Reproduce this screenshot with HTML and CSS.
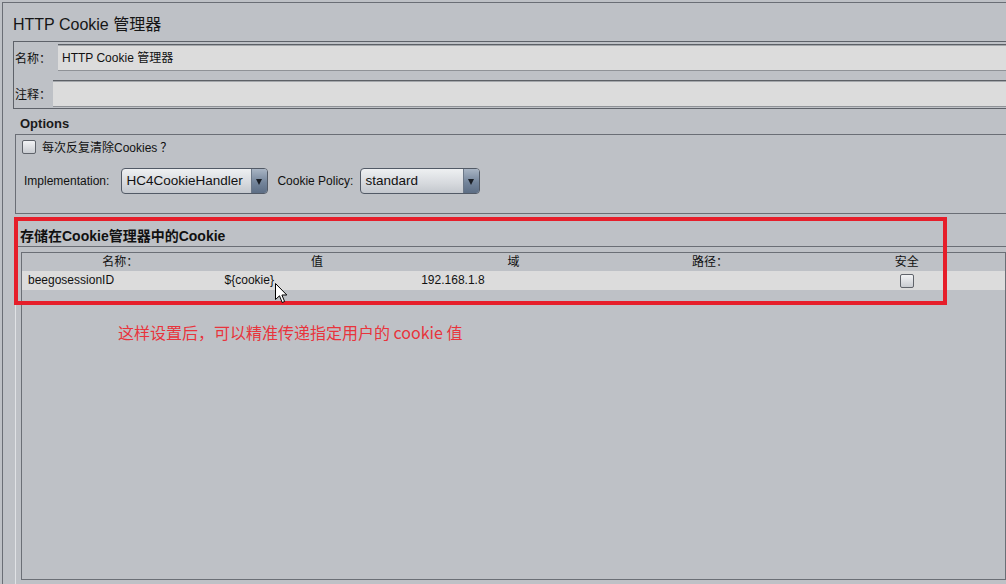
FILE: index.html
```html
<!DOCTYPE html>
<html lang="zh">
<head>
<meta charset="utf-8">
<title>HTTP Cookie 管理器</title>
<link rel="stylesheet" href="styles.css">
</head>
<body>
<div class="app">
  <div class="title">HTTP Cookie 管理器</div>

  <div class="name-panel">
    <div class="frow r1"><span class="lbl l1">名称：</span><div class="field">HTTP Cookie 管理器</div></div>
    <div class="frow r2"><span class="lbl l2">注释：</span><div class="field"></div></div>
  </div>

  <div class="sec-title">Options</div>
  <div class="options">
    <div class="chk-row"><span class="chk"></span><span>每次反复清除Cookies<span class="q">？</span></span></div>
    <div class="combo-row">
      <span class="clabel">Implementation:</span>
      <div class="combo c1"><span class="cval">HC4CookieHandler</span><span class="arrow"></span></div>
      <span class="clabel cl2">Cookie Policy:</span>
      <div class="combo c2"><span class="cval">standard</span><span class="arrow"></span></div>
    </div>
  </div>

  <div class="cookie-sec">
    <div class="sec-title2">存储在Cookie管理器中的Cookie</div>
    <div class="cookie-body">
      <div class="table">
        <div class="trow thead">
          <div class="th">名称：</div>
          <div class="th">值</div>
          <div class="th">域</div>
          <div class="th">路径：</div>
          <div class="th">安全</div>
        </div>
        <div class="trow tdata">
          <div class="td">beegosessionID</div>
          <div class="td">${cookie}</div>
          <div class="td">192.168.1.8</div>
          <div class="td"></div>
          <div class="td center"><span class="chk"></span></div>
        </div>
      </div>
    </div>
  </div>

  <div class="redbox"></div>
  <div class="note">这样设置后，可以精准传递指定用户的 cookie 值</div>
  <svg class="cursor" width="13" height="21" viewBox="0 0 13 21">
    <path d="M0.5 0.5 L0.5 16.5 L4.5 12.8 L7.2 19.5 L9.6 18.5 L6.9 12 L11.8 12 Z" fill="#fff" stroke="#000" stroke-width="1" stroke-linejoin="miter"/>
  </svg>
</div>
</body>
</html>
```

FILE: styles.css
```css
html, body {
  margin: 0;
  padding: 0;
  width: 1006px;
  height: 584px;
  overflow: hidden;
  background: #bec1c6;
}

body {
  font-family: "Liberation Sans", "Noto Sans CJK SC", sans-serif;
  font-size: 12px;
  color: #111;
}

.app {
  position: relative;
  margin: 2px 0 0 2px;
  border-left: 1px solid #6a6e75;
  border-top: 1px solid #6a6e75;
  height: 581px;
}

.title {
  height: 38px;
  box-sizing: border-box;
  padding: 4px 0 0 10px;
  line-height: 36px;
  font-size: 16px;
  color: #161616;
}

.name-panel {
  margin: 0 -30px 0 10px;
  border: 1px solid #5e6269;
  height: 66px;
}

.frow {
  display: flex;
  align-items: center;
}

.r1 { margin-top: 2px; }
.r2 { margin-top: 9px; }

.lbl {
  flex: none;
  padding-left: 1px;
  box-sizing: border-box;
}
.l1 { width: 44px; }
.l2 { width: 39px; }

.field {
  flex: 1;
  height: 27px;
  box-sizing: border-box;
  background: #dcdcdc;
  border-top: 1px solid #5c6066;
  border-bottom: 1px solid #8f9297;
  box-shadow: inset 0 1px 0 #a4a7ab;
  padding: 1px 0 0 4px;
  line-height: 24px;
  color: #111;
}

.sec-title {
  height: 25px;
  box-sizing: border-box;
  padding: 4px 0 0 17px;
  line-height: 22px;
  font-size: 13px;
  font-weight: bold;
  color: #1a1a1a;
}

.options {
  margin: 0 -30px 0 12px;
  border: 1px solid #6a6e75;
  height: 78px;
  box-sizing: content-box;
  padding-left: 6px;
}

.chk-row {
  display: flex;
  align-items: center;
  margin-top: 5px;
  height: 13px;
  gap: 6px;
}

.q {
  font-family: "Noto Sans CJK SC", sans-serif;
  margin-left: 3px;
}

.chk {
  display: inline-block;
  width: 12px;
  height: 12px;
  border: 1px solid #5f636a;
  border-radius: 2px;
  background: linear-gradient(#f2f3f5, #c9ccd1);
  box-sizing: content-box;
}

.combo-row {
  display: flex;
  align-items: center;
  margin-top: 15px;
  height: 26px;
  padding-left: 2px;
}

.clabel { flex: none; }
.cl2 { margin-left: 9px; margin-right: 7px; }

.combo {
  display: flex;
  box-sizing: border-box;
  height: 26px;
  border: 1px solid #525a66;
  border-radius: 4px;
  background: linear-gradient(#eef0f2, #d6d9dd 60%, #c3c7cd);
  overflow: hidden;
  font-size: 13.5px;
}

.c1 { width: 147px; margin-left: 12px; }
.c2 { width: 120px; }

.cval {
  flex: 1;
  padding-left: 4px;
  line-height: 24px;
  color: #111;
  white-space: nowrap;
  overflow: hidden;
}

.arrow {
  flex: none;
  width: 15px;
  border-left: 1px solid #6c7888;
  background: linear-gradient(#a9b5c4, #74859b 55%, #5d6e85);
  position: relative;
}

.arrow::after {
  content: "";
  position: absolute;
  left: 4px;
  top: 10px;
  border-left: 3.5px solid transparent;
  border-right: 3.5px solid transparent;
  border-top: 6px solid #1b1f26;
}

.sec-title2 {
  height: 32px;
  box-sizing: border-box;
  padding: 12px 0 0 17px;
  line-height: 20px;
  font-size: 14px;
  font-weight: bold;
  color: #111;
}

.cookie-body {
  margin-left: 12px;
  border-top: 1px solid #6a6e75;
  border-left: 1px solid #e0e2e5;
  padding: 5px 0 0 5px;
  height: 334px;
}

.table {
  border: 1px solid #6b6f76;
  height: 328px;
  box-sizing: border-box;
}

.trow {
  display: grid;
  grid-template-columns: repeat(5, 1fr);
}

.thead {
  height: 18px;
  line-height: 18px;
}

.th {
  text-align: center;
  color: #111;
}

.tdata {
  height: 19px;
  line-height: 19px;
  background: #dcdcdc;
}

.td {
  padding-left: 6px;
  white-space: nowrap;
  color: #111;
}

.td.center {
  padding-left: 0;
  display: flex;
  justify-content: center;
  align-items: center;
}

.redbox {
  position: absolute;
  left: 11px;
  top: 214px;
  width: 933px;
  height: 88px;
  box-sizing: border-box;
  border: 4px solid #e61e2a;
}

.note {
  position: absolute;
  left: 115px;
  top: 319px;
  font-family: "Noto Sans CJK SC", "Liberation Sans", sans-serif;
  font-size: 16px;
  line-height: 20px;
  color: #e8343c;
  white-space: nowrap;
}

.cursor {
  position: absolute;
  left: 272px;
  top: 280px;
}
```
